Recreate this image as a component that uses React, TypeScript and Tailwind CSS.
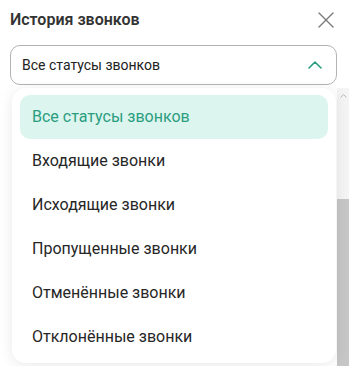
import React from 'react';

const options = [
  'Все статусы звонков',
  'Входящие звонки',
  'Исходящие звонки',
  'Пропущенные звонки',
  'Отменённые звонки',
  'Отклонённые звонки',
];

const App: React.FC = () => {
  const selected = 0;

  return (
    <div className="w-[349px] h-[366px] overflow-hidden bg-white font-['Roboto',sans-serif] flex flex-col">
      {/* Header */}
      <div className="flex items-center justify-between pl-[10px] pr-[15px] pt-[8px] h-[32px]">
        <h2 className="text-[16px] leading-[24px] font-semibold text-[#333333]">История звонков</h2>
        <button className="w-4 h-4 flex items-center justify-center text-[#7a7a7a]">
          <svg width="16" height="16" viewBox="0 0 16 16" fill="none" stroke="currentColor" strokeWidth="1.4" strokeLinecap="round">
            <path d="M1 1L15 15M15 1L1 15" />
          </svg>
        </button>
      </div>

      {/* Select */}
      <div className="relative mt-[13px] flex-1 flex flex-col">
        <div className="ml-[10px] w-[327px] h-[40px] border border-[#b3b3b3] rounded-[10px] flex items-center justify-between pl-[11px] pr-[14px]">
          <span className="text-[14px] text-[#222222]">Все статусы звонков</span>
          <svg width="14" height="8" viewBox="0 0 14 8" fill="none" stroke="#2a9d80" strokeWidth="1.6" strokeLinecap="round" strokeLinejoin="round">
            <path d="M1 7L7 1L13 7" />
          </svg>
        </div>

        {/* Content area with scrollbar */}
        <div className="flex-1 flex mt-[3px]">
          <div className="flex-1" />
          <div className="w-[12px] flex flex-col bg-[#f4f4f4]">
            <div className="h-[16px] flex items-center justify-center">
              <svg width="7" height="4" viewBox="0 0 7 4" fill="none" stroke="#b8b8b8" strokeWidth="1">
                <path d="M0.5 3.5L3.5 0.5L6.5 3.5" />
              </svg>
            </div>
            <div className="h-[95px]" />
            <div className="flex-1 bg-[#c6c6c6]" />
          </div>
        </div>

        {/* Dropdown menu */}
        <div className="absolute left-[12px] top-[43px] w-[324px] h-[275px] bg-white rounded-[14px] shadow-[0_2px_14px_rgba(0,0,0,0.09)] px-[8px] pt-[7px] flex flex-col">
          {options.map((o, i) => (
            <div
              key={o}
              className={`h-[44px] shrink-0 flex items-center pl-[12px] rounded-[10px] text-[16px] ${
                i === selected ? 'bg-[#dcf5ee] text-[#2a9d80]' : 'text-[#262626]'
              }`}
            >
              {o}
            </div>
          ))}
        </div>
      </div>
    </div>
  );
};

export default App;
